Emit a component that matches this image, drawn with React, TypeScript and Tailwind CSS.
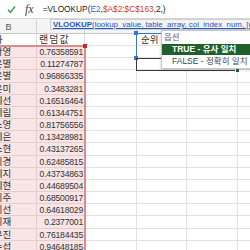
const rows: [string, string][] = [
  ['김아영', '0.76358591'],
  ['이은별', '0.11274787'],
  ['박은별', '0.96866335'],
  ['최은미', '0.3483281'],
  ['정혜선', '0.16516464'],
  ['한혜림', '0.61344751'],
  ['윤소영', '0.81756556'],
  ['조혜은', '0.13428981'],
  ['강소현', '0.43137265'],
  ['임미경', '0.62485815'],
  ['오혜지', '0.43734863'],
  ['서혜현', '0.44689504'],
  ['신미주', '0.68500917'],
  ['권미선', '0.64618029'],
  ['황미재', '0.2377001'],
  ['안우진', '0.76184435'],
  ['송수섭', '0.94648185'],
];

const kr = "font-['Liberation_Sans','Noto_Sans_CJK_KR',sans-serif]";

const App = () => {
  return (
    <div className={`relative w-[250px] h-[250px] overflow-hidden bg-white ${kr}`}>
      {/* Formula bar */}
      <div className="flex items-center h-[19px] border-b border-[#d6d6d6] bg-white">
        <svg width="9" height="9" viewBox="0 0 9 9" className="ml-[7px]">
          <path d="M1 4.8 L3.4 7.4 L8 1.4" fill="none" stroke="#3f9b4b" strokeWidth="1.5" />
        </svg>
        <span className="ml-[9px] font-['Liberation_Serif'] italic text-[12px] text-[#444] leading-none">fx</span>
        <span className="ml-[9px] text-[8.3px] text-[#222] leading-none whitespace-nowrap">
          =VLOOKUP(<span className="text-[#3567d0]">E2</span>,
          <span className="text-[#c4393a]">$A$2:$C$163</span>,2,)
        </span>
      </div>

      {/* Column headers */}
      <div className="flex h-[15px] ml-[-19px] bg-[#f4f4f4] border-b border-[#c9c9c9] text-[9px] text-[#555]">
        <div className="w-[56px] shrink-0 flex items-center justify-center border-r border-[#d4d4d4] pt-[3px]">B</div>
        <div className="w-[48px] shrink-0 border-r border-[#d4d4d4]" />
        <div className="w-[52px] shrink-0 border-r border-[#d4d4d4]" />
        <div className="w-[50px] shrink-0 border-r border-[#d4d4d4]" />
        <div className="w-[51px] shrink-0 border-r border-[#d4d4d4]" />
        <div className="w-[40px] shrink-0" />
      </div>

      {/* Grid */}
      <div className="ml-[-19px]">
        <div className="flex h-[12.17px] border-b border-[#e2e2e2]">
          <div className="w-[56px] shrink-0 border-r border-[#dcdcdc] pl-[4px] text-[9.5px] leading-[12px] text-[#333] whitespace-nowrap">
            참가
          </div>
          <div className="w-[48px] shrink-0 border-r border-[#dcdcdc] pl-[2px] text-[10px] tracking-[1px] leading-[12px] text-[#333]">
            랜덤값
          </div>
          <div className="w-[52px] shrink-0 border-r border-[#dcdcdc]" />
          <div className="w-[50px] shrink-0 border-r border-[#dcdcdc] pl-[4px] text-[9.5px] leading-[12px] text-[#333]">
            순위
          </div>
          <div className="w-[51px] shrink-0 border-r border-[#dcdcdc]" />
          <div className="w-[40px] shrink-0" />
        </div>
        {rows.map(([name, val]) => (
          <div key={name} className="flex h-[12.17px]">
            <div className="w-[56px] shrink-0 bg-[#f8e5e5] border-r border-b border-[#e6cccc] pl-[4px] text-[9.5px] leading-[11px] text-[#333] whitespace-nowrap">
              {name}
            </div>
            <div className="w-[48px] shrink-0 bg-[#f8e5e5] border-b border-[#e6cccc] pr-[2px] text-right text-[8.6px] tracking-[-0.2px] leading-[12px] text-[#333]">
              {val}
            </div>
            <div className="w-[52px] shrink-0 border-r border-b border-[#e2e2e2]" />
            <div className="w-[50px] shrink-0 border-r border-b border-[#e2e2e2]" />
            <div className="w-[51px] shrink-0 border-r border-b border-[#e2e2e2]" />
            <div className="w-[40px] shrink-0 border-b border-[#e2e2e2]" />
          </div>
        ))}
      </div>

      {/* Red reference range */}
      <div className="absolute left-[-4px] top-[45px] w-[90px] h-[220px] border-2 border-[#dc8c8c]" />
      <div className="absolute left-[83px] top-[44px] w-[4px] h-[4px] bg-[#c92a2a]" />

      {/* Blue reference */}
      <div className="absolute left-[136px] top-[33px] w-[52px] h-[26px] border border-[#3b72d4]" />
      <div className="absolute left-[134px] top-[31px] w-[4px] h-[4px] bg-[#3b72d4]" />
      <div className="absolute left-[134px] top-[56px] w-[4px] h-[4px] bg-[#3b72d4]" />

      {/* Active cell */}
      <div className="absolute left-[136px] top-[58px] w-[102px] h-[13px] border-[1.5px] border-[#3c3c3c]" />
      <div className="absolute left-[235px] top-[68px] w-[5px] h-[5px] bg-[#1e6a2d] border border-white" />

      {/* Function tooltip */}
      <div className="absolute left-[50px] top-[19px] w-[220px] h-[11px] bg-[#f3f3f3] border border-[#cfcfcf] pl-[2px] text-[7.9px] leading-[9px] text-[#2357c6] underline whitespace-nowrap">
        <span className="font-bold">VLOOKUP</span>(lookup_value, table_array, col_index_num, [range_lookup])
      </div>

      {/* Options dropdown */}
      <div className="absolute left-[161px] top-[30px] w-[95px] h-[39px] bg-white border border-[#c6c6c6] shadow-[0_1px_3px_rgba(0,0,0,0.2)] flex flex-col">
        <div className="h-[13px] pl-[2px] text-[8.5px] leading-[12px] text-[#666]">옵션</div>
        <div className="h-[11px] bg-[#22602b] pl-[10px] text-[8.5px] leading-[11px] font-bold text-white whitespace-nowrap">
          TRUE - 유사 일치
        </div>
        <div className="h-[13px] pl-[10px] text-[8.5px] leading-[13px] text-[#444] whitespace-nowrap">
          FALSE - 정확히 일치
        </div>
      </div>
    </div>
  );
};

export default App;
